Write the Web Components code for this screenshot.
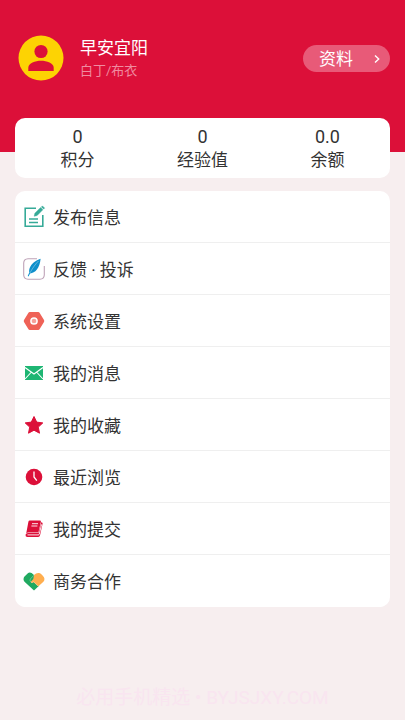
<!DOCTYPE html>
<html lang="zh-CN">
<head>
<meta charset="utf-8">
<meta name="viewport" content="width=device-width, initial-scale=1">
<title>我的</title>
<style>
body { margin: 0; background: #f7eeef; font-family: Roboto, "Noto Sans CJK SC", sans-serif; color: #333; }
</style>
</head>
<body>
<profile-page></profile-page>
<script>
const define = (name, html) => customElements.define(name, class extends HTMLElement {
  constructor() {
    super();
    this.attachShadow({ mode: 'open' }).innerHTML = html;
  }
});

const ICONS = {
  publish: '<g fill="none" stroke="#36aa98" stroke-width="1.6"><path d="M14 3.2H3.200v18h17.600V10M7 14h9M7 17.500h9"/></g><path d="M12.200 11.200l.7-2.900 5.700-5.700 2.200 2.200-5.700 5.700zM19.400 1.900l1-1 2.200 2.200-1 1z" fill="#36aa98" stroke="#36aa98" stroke-width=".5"/>',
  feather: '<path d="M15 1.700H6A4.500 4.500 0 0 0 1.700 6v12A4.500 4.500 0 0 0 6 22.200h12a4.500 4.500 0 0 0 4.300-4.200V9" fill="none" stroke="#bfa3b8" stroke-width="1.100"/><path d="M18.600 1.700c-5 1.500-9 5-10.800 9-.7 1.800-.8 3.500-.5 4.800l-1.600 3.600.8.300 1.600-3c5-.4 9.700-5.100 10.500-14.700z" fill="#0f8fcb"/><path d="M7.800 16.200C10 12 13 7.500 16.500 4" fill="none" stroke="#d8f0fa" stroke-width=".4"/>',
  settings: '<path d="M7.800 3h8.400q1 0 1.500.9l4.300 7.200q.5.900 0 1.800l-4.300 7.200q-.5.900-1.500.9H7.800q-1 0-1.500-.9L2 12.900q-.5-.9 0-1.800l4.300-7.200Q6.800 3 7.800 3z" fill="#ef6257"/><circle cx="12" cy="12" r="3.100" fill="#f6a29a" stroke="#fff" stroke-width="1.500"/>',
  mail: '<path d="M3 5h18v14H3z" fill="#1eb673"/><path d="M3 6.500l9 6.500 9-6.500M3 18l6-6.500M21 18l-6-6.500" fill="none" stroke="#fff" stroke-width="1.100"/>',
  star: '<path d="M12 3.500l2.700 5.600 6.100.8-4.500 4.200 1.200 6.100-5.500-3-5.500 3 1.200-6.100-4.500-4.200 6.100-.8z" fill="#dc1039" stroke="#dc1039" stroke-width="1" stroke-linejoin="round"/>',
  clock: '<circle cx="12" cy="12" r="8.300" fill="#dc1039"/><path d="M12 6.500V12l2.800 3.600" fill="none" stroke="#fff" stroke-width="1.300"/>',
  book: '<path d="M7.700 3.500h10.100q1.400 0 1.100 1.400l-2.500 10.700H6.300q-1.500 0-2.100 1L6.400 4.800q.3-1.300 1.300-1.300z" fill="#dc1039"/><path d="M3.500 17.800q.6-1.900 2.500-1.900h10.500l2.900-11 .6.500q.8.500.6 1.400l-2.500 11.300q-.4 1.900-2 1.900H5.500q-2.200 0-2-2.200z" fill="#dc1039"/><path d="M10 6.700h6M9.400 9h6M5.500 17.900h10.800q.8 0 1-.9l2.300-9.600" fill="none" stroke="#fff" stroke-width=".9"/>',
  partner: '<path d="M12 6L9.600 4.100Q7.500 2.900 5.600 4.500L2.500 7.500q-2 2.700 0 5.200l9.500 8.800 4.800-4.400L12 8z" fill="#20a960"/><path d="M12 6q2.400-2.500 5.200-2 1.500.3 3.600 2.700 3 3.200.6 6.100l-5.200 4.800-4.500-4.400q-2.200 1.500-3-.3L11.300 10z" fill="#ffae4f"/><path d="M11.900 6.200L8.300 10q-.9 2 .7 3.200 1.300.6 2.700-.5l4.600 4.500" fill="none" stroke="#fff" stroke-width=".3"/>'
};

define('user-avatar', `
<style>:host { display: block; width: 46px; height: 46px; flex: none; } svg { display: block; width: 100%; }</style>
<svg viewBox="0 0 46 46" aria-hidden="true"><circle cx="23" cy="23" r="22.500" fill="#fdd303"/><circle cx="23" cy="16.500" r="6.600" fill="#dc1039"/><path d="M10.300 36v-3.300c0-4.700 7-7 12.700-7s12.700 2.300 12.700 7V36z" fill="#dc1039"/></svg>`);

define('profile-header', `
<style>
:host { display: flex; align-items: center; gap: 16px; padding: 34px 15px 70px 18px; background: #dc1039; color: #fff; }
.who { flex: 1; padding-top: 2px; }
h1, p { margin: 0; font-weight: 400; }
h1 { font-size: 17px; line-height: 24px; }
p { font-size: 13px; line-height: 22px; color: #f08ba0; }
button { display: flex; align-items: center; justify-content: space-between; width: 87px; height: 27px; padding: 1px 10px 0 16px; border: 0; border-radius: 14px; background: #e85a78; color: #fff; font: inherit; font-size: 17px; line-height: 24px; }
svg { width: 6px; height: 10px; }
</style>
<user-avatar></user-avatar>
<div class="who"><h1>早安宜阳</h1><p>白丁/布衣</p></div>
<button type="button">资料<svg viewBox="0 0 6 10" aria-hidden="true"><path d="M1 1.500L4.700 5 1 8.500" fill="none" stroke="#fff" stroke-width="1.400"/></svg></button>`);

define('stat-item', `
<style>
:host { display: block; flex: 1; text-align: center; font-size: 17px; line-height: 24px; }
.value { font-size: 18px; line-height: 22px; }
</style>
<div class="value"><slot name="value"></slot></div><div><slot></slot></div>`);

define('stat-card', `
<style>:host { display: flex; margin: -34px 15px 0; padding: 8px 0 6px; border-radius: 10px; background: #fff; }</style>
<slot></slot>`);

define('menu-list', `
<style>:host { display: block; margin: 13px 15px 0; border-radius: 10px; background: #fff; overflow: hidden; }</style>
<nav><slot></slot></nav>`);

customElements.define('menu-row', class extends HTMLElement {
  connectedCallback() {
    if (this.shadowRoot) return;
    this.attachShadow({ mode: 'open' }).innerHTML = `
<style>
:host { display: block; border-bottom: 1px solid #efefef; }
:host(:last-child) { border-bottom-color: #fff; }
a { display: flex; align-items: center; gap: 7px; height: 51px; padding-left: 7px; color: #333; font-size: 17px; line-height: 24px; text-decoration: none; }
span { padding-top: 2px; }
svg { width: 24px; height: 24px; flex: none; }
</style>
<a href="#${this.getAttribute('icon')}"><svg viewBox="0 0 24 24" aria-hidden="true">${ICONS[this.getAttribute('icon')]}</svg><span><slot></slot></span></a>`;
  }
});

define('page-mark', `
<style>:host { display: block; margin-top: 76px; text-align: center; color: #f9e5f0; font-size: 19px; line-height: 30px; white-space: nowrap; }</style>
<slot></slot>`);

define('profile-page', `
<style>:host { display: block; }</style>
<profile-header></profile-header>
<main>
<stat-card>
<stat-item><span slot="value">0</span>积分</stat-item>
<stat-item><span slot="value">0</span>经验值</stat-item>
<stat-item><span slot="value">0.0</span>余额</stat-item>
</stat-card>
<menu-list>
<menu-row icon="publish">发布信息</menu-row>
<menu-row icon="feather">反馈 · 投诉</menu-row>
<menu-row icon="settings">系统设置</menu-row>
<menu-row icon="mail">我的消息</menu-row>
<menu-row icon="star">我的收藏</menu-row>
<menu-row icon="clock">最近浏览</menu-row>
<menu-row icon="book">我的提交</menu-row>
<menu-row icon="partner">商务合作</menu-row>
</menu-list>
</main>
<page-mark>必用手机精选 • BYJSJXY.COM</page-mark>`);
</script>
</body>
</html>
